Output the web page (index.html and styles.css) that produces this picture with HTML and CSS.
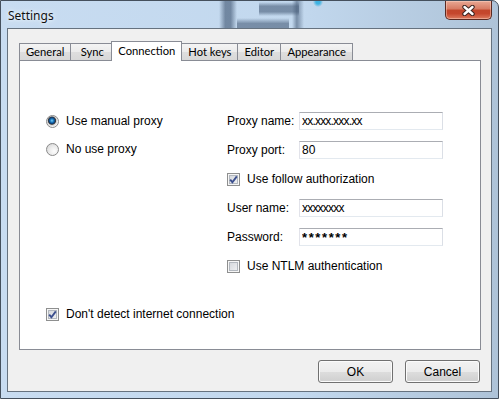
FILE: index.html
```html
<!DOCTYPE html>
<html lang="en">
<head>
    <meta charset="UTF-8">
    <title>Settings</title>
    <link rel="stylesheet" href="styles.css">
</head>
<body>
    <div class="window">
        <div class="titlebar">
            <span class="title">Settings</span>
            <button class="close" title="Close">
                <svg width="13" height="11" viewBox="0 0 13 11">
                    <path d="M2.5 2 L10.5 9 M10.5 2 L2.5 9" stroke="#3b2420" stroke-width="4.4" stroke-linecap="round"/>
                    <path d="M2.5 2 L10.5 9 M10.5 2 L2.5 9" stroke="#ffffff" stroke-width="2.4" stroke-linecap="round"/>
                </svg>
            </button>
        </div>

        <div class="client">
            <div class="tabs">
                <div class="tab">General</div>
                <div class="tab">Sync</div>
                <div class="tab active">Connection</div>
                <div class="tab">Hot keys</div>
                <div class="tab">Editor</div>
                <div class="tab">Appearance</div>
            </div>

            <div class="panel">
                <div class="proxy">
                    <div class="modes">
                        <label class="option"><input type="radio" name="mode" checked> Use manual proxy</label>
                        <label class="option"><input type="radio" name="mode"> No use proxy</label>
                    </div>

                    <div class="fields">
                        <div class="row">
                            <span class="name">Proxy name:</span>
                            <input class="field masked" type="text" value="xx.xxx.xxx.xx">
                        </div>
                        <div class="row">
                            <span class="name">Proxy port:</span>
                            <input class="field" type="text" value="80">
                        </div>
                        <label class="option">
                            <span class="box"><svg width="11" height="11" viewBox="0 0 11 11"><path d="M2.2 5.6 L4.4 8.2 L8.8 2.4" fill="none" stroke="#3c4f8e" stroke-width="1.9"/></svg></span>
                            Use follow authorization
                        </label>
                        <div class="row">
                            <span class="name">User name:</span>
                            <input class="field masked" type="text" value="xxxxxxxx">
                        </div>
                        <div class="row">
                            <span class="name">Password:</span>
                            <input class="field secret" type="text" value="*******">
                        </div>
                        <label class="option">
                            <span class="box"></span>
                            Use NTLM authentication
                        </label>
                    </div>
                </div>

                <label class="option detect">
                    <span class="box"><svg width="11" height="11" viewBox="0 0 11 11"><path d="M2.2 5.6 L4.4 8.2 L8.8 2.4" fill="none" stroke="#3c4f8e" stroke-width="1.9"/></svg></span>
                    Don't detect internet connection
                </label>
            </div>

            <div class="actions">
                <button class="btn">OK</button>
                <button class="btn">Cancel</button>
            </div>
        </div>
    </div>
</body>
</html>
```

FILE: styles.css
```css
* {
    box-sizing: border-box;
}

html, body {
    margin: 0;
    height: 100%;
    overflow: hidden;
}

body {
    font-family: "Liberation Sans", Arial, sans-serif;
    font-size: 12px;
    color: #000;
}

/* Aero glass frame */
.window {
    height: 399px;
    display: flex;
    flex-direction: column;
    border: 1px solid #45505d;
    border-top-right-radius: 7px;
    padding: 0 6px 6px 6px;
    background:
        radial-gradient(circle, #3fb3e2 0, #3fb3e2 2px, rgba(63, 179, 226, 0) 5px) 310px -6px / 14px 14px no-repeat,
        linear-gradient(90deg, rgba(70, 92, 120, 0), rgba(70, 92, 120, .65) 35%, rgba(70, 92, 120, .65) 65%, rgba(70, 92, 120, 0)) 218px 0 / 18px 28px no-repeat,
        linear-gradient(180deg, rgba(70, 92, 120, 0), rgba(70, 92, 120, .6) 50%, rgba(70, 92, 120, .6)) 236px 17px / 52px 11px no-repeat,
        linear-gradient(180deg, rgba(70, 92, 120, 0), rgba(70, 92, 120, .6) 30%, rgba(70, 92, 120, .6) 70%, rgba(70, 92, 120, 0)) 258px 1px / 40px 14px no-repeat,
        linear-gradient(90deg, rgba(70, 92, 120, 0), rgba(70, 92, 120, .6) 40%, rgba(70, 92, 120, 0)) 291px 0 / 12px 28px no-repeat,
        linear-gradient(90deg, #c8dcf1, #c2d8ee 60%, #aec3d8);
}

.titlebar {
    height: 27px;
    display: flex;
    justify-content: space-between;
    align-items: flex-start;
}

.title {
    padding: 6px 0 0 1px;
    font-family: "Noto Sans", "Open Sans", sans-serif;
    font-size: 12px;
    line-height: 17px;
    color: #111;
    text-shadow: 0 0 6px #eef6ff, 0 0 3px #eef6ff;
}

.close {
    width: 47px;
    height: 19px;
    padding: 0;
    display: flex;
    align-items: center;
    justify-content: center;
    border: 1px solid #5a2a22;
    border-top: none;
    border-radius: 0 0 5px 5px;
    background: linear-gradient(#e9a894, #d77a62 45%, #c2462b 50%, #c5472d 70%, #dd7b5f);
    box-shadow: inset 0 0 0 1px rgba(255, 220, 205, .45);
}

.client {
    flex: 1;
    display: flex;
    flex-direction: column;
    border: 1px solid #66727f;
    background: #f0f0f0;
    padding: 12px 10px 8px 11px;
}

/* Tabs */
.tabs {
    display: flex;
    align-items: flex-end;
    height: 19px;
    font-family: Lato, "Noto Sans", sans-serif;
    font-size: 11.2px;
}

.tab {
    min-width: 44px;
    height: 17px;
    line-height: 15px;
    padding: 0 6px;
    margin-right: -1px;
    text-align: center;
    border: 1px solid #898c95;
    border-bottom: none;
    background: linear-gradient(#f4f4f4, #ebebeb 50%, #dedede 51%, #d8d8d8);
    color: #000;
}

.tab.active {
    position: relative;
    z-index: 1;
    height: 20px;
    line-height: 17px;
    margin: 0 -1px -1px -2px;
    padding: 0 6px;
    background: #fff;
}

.panel {
    flex: 1;
    background: #fff;
    border: 1px solid #898c95;
    padding: 51px 0 0 26px;
}

.proxy {
    display: flex;
}

.modes {
    width: 181px;
    display: flex;
    flex-direction: column;
    gap: 10px;
}

.fields {
    display: flex;
    flex-direction: column;
    gap: 11px;
}

.row,
.option {
    display: flex;
    align-items: center;
    height: 18px;
}

.option {
    gap: 7px;
}

.name {
    width: 72px;
    white-space: nowrap;
}

.field {
    width: 144px;
    height: 18px;
    margin: 0;
    padding: 0 2px;
    border: 1px solid;
    border-color: #abadb3 #dbdfe6 #e3e9ef #e2e3ea;
    font-family: "Liberation Sans", Arial, sans-serif;
    font-size: 12px;
    color: #000;
    outline: none;
}

.field.masked {
    letter-spacing: -0.8px;
}

.field.secret {
    font-size: 13px;
    font-weight: bold;
    letter-spacing: 1.6px;
}

/* Radio buttons */
.option input[type="radio"] {
    appearance: none;
    -webkit-appearance: none;
    width: 13px;
    height: 13px;
    margin: 0;
    border-radius: 50%;
    border: 1px solid #8a8a8a;
    background: radial-gradient(circle at 65% 65%, #fdfdfd 0, #ececec 45%, #cfcfcf 100%);
}

.option input[type="radio"]:checked {
    background: radial-gradient(circle at 45% 42%, #7fd0f6 0, #1f7fc4 1.6px, #0c3f78 3px, #3b3b3b 3.7px, #d2d2d2 4.5px, #f5f5f5 6px);
}

/* Check boxes */
.box {
    width: 13px;
    height: 13px;
    display: flex;
    align-items: center;
    justify-content: center;
    border: 1px solid #8e8f8f;
    background: linear-gradient(135deg, #d0d3d8, #f4f5f6);
    box-shadow: inset 0 0 0 1px #f6f6f6, inset 0 0 0 2px #b3b8bf;
}

.detect {
    margin-top: 30px;
}

/* Dialog buttons */
.actions {
    display: flex;
    justify-content: flex-end;
    gap: 12px;
    margin-top: 10px;
    padding-right: 1px;
}

.btn {
    width: 75px;
    height: 23px;
    padding: 0;
    border: 1px solid #707070;
    border-radius: 3px;
    background: linear-gradient(#f2f2f2, #ebebeb 50%, #dddddd 51%, #cfcfcf);
    box-shadow: inset 0 0 0 1px #fbfbfb;
    font-family: "Liberation Sans", Arial, sans-serif;
    font-size: 12px;
    color: #000;
}
```
